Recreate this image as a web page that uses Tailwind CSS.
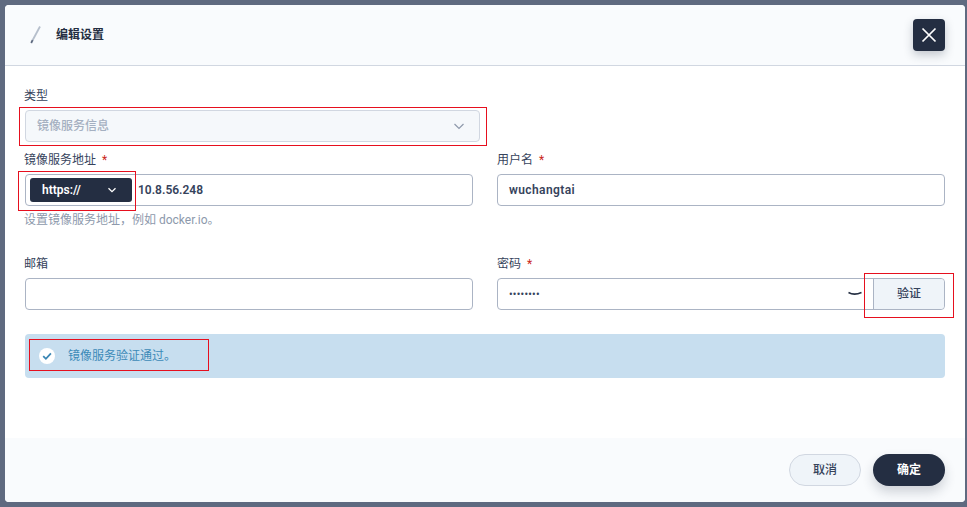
<!DOCTYPE html>
<html lang="zh-CN">
<head>
<meta charset="utf-8">
<script src="https://cdn.jsdelivr.net/npm/@tailwindcss/browser@4"></script>
</head>
<body class="m-0 h-[507px] w-[967px] overflow-hidden bg-[#5f6a80] font-['Roboto','Noto_Sans_CJK_SC',sans-serif] text-[12px] text-[#36435c]">
<div class="relative h-[507px] w-[967px] pt-[5px] pl-[5px]">
  <div class="flex h-[497px] w-[960px] flex-col rounded-[4px] bg-white">
    <header class="flex h-[61px] shrink-0 items-center border-b border-[#d1d7e1] bg-[#f9fbfd] pl-[24px] pr-[20px] rounded-t-[4px]">
      <svg class="h-[20px] w-[12px]" viewBox="0 0 12 20"><path d="M11 1.5 3.2 16" stroke="#b6bfcc" stroke-width="1.8" fill="none"/><path d="M3.6 15.2 2.2 18" stroke="#5f6a80" stroke-width="1.8" fill="none"/></svg>
      <span class="ml-[15px] text-[12px] font-semibold text-[#242e42]">编辑设置</span>
      <button class="ml-auto flex h-[32px] w-[32px] items-center justify-center rounded-[4px] bg-[#242e42] shadow-[0_4px_10px_rgba(36,46,66,0.25)]">
        <svg class="h-[16px] w-[16px]" viewBox="0 0 16 16"><path d="M1.5 1.5 14.5 14.5M14.5 1.5 1.5 14.5" stroke="#fff" stroke-width="1.7" fill="none"/></svg>
      </button>
    </header>
    <main class="flex-1 px-[20px] pt-[21px]">
      <label class="-ml-px block h-[18px] leading-[18px] text-[#36435c]">类型</label>
      <div class="mt-[5px] flex h-[32px] w-[455px] items-center justify-between rounded-[4px] border border-[#d1d7e1] bg-[#f5f8fb] pl-[11px] pr-[14px] text-[#a5b0c1] font-medium">
        <span>镜像服务信息</span>
        <svg class="h-[12px] w-[12px]" viewBox="0 0 12 12"><path d="M1.5 4 6 8.5 10.5 4" stroke="#8e99ab" stroke-width="1.2" fill="none"/></svg>
      </div>
      <div class="mt-[9px] grid grid-cols-2 gap-x-[24px]">
        <div>
          <label class="-ml-px block h-[18px] leading-[18px]">镜像服务地址<span class="ml-[6px] text-[#ca2621]">*</span></label>
          <div class="mt-[5px] flex h-[32px] items-center rounded-[4px] border border-[#abb4c4] bg-white pl-[4px]">
            <div class="flex h-[24px] w-[102px] items-center justify-between rounded-[3px] bg-[#242e42] pl-[12px] pr-[15px] font-semibold text-white">
              <span>https://</span>
              <svg class="h-[10px] w-[10px]" viewBox="0 0 10 10"><path d="M1.5 3.2 5 6.7 8.5 3.2" stroke="#fff" stroke-width="1.3" fill="none"/></svg>
            </div>
            <span class="ml-[6px] font-semibold text-[#36435c]">10.8.56.248</span>
          </div>
          <p class="-ml-px mt-[6px] h-[16px] leading-[16px] text-[#8d99ac]">设置镜像服务地址，例如 docker.io。</p>
        </div>
        <div>
          <label class="block h-[18px] leading-[18px]">用户名<span class="ml-[6px] text-[#ca2621]">*</span></label>
          <div class="mt-[5px] flex h-[32px] items-center rounded-[4px] border border-[#abb4c4] bg-white pl-[11px] font-semibold tracking-[0.4px]">wuchangtai</div>
        </div>
      </div>
      <div class="mt-[27px] grid grid-cols-2 gap-x-[24px]">
        <div>
          <label class="block h-[18px] leading-[18px] -ml-px">邮箱</label>
          <div class="mt-[5px] h-[32px] rounded-[4px] border border-[#abb4c4] bg-white"></div>
        </div>
        <div>
          <label class="block h-[18px] leading-[18px]">密码<span class="ml-[6px] text-[#ca2621]">*</span></label>
          <div class="mt-[5px] flex h-[32px] items-center rounded-[4px] border border-[#abb4c4] bg-white">
            <span class="ml-[11px] font-semibold tracking-[0.3px] text-[10px]">••••••••</span>
            <svg class="ml-auto mr-[10px] h-[6px] w-[16px]" viewBox="0 0 16 6"><path d="M1.5 1.5C5 3.5 10 3.5 14.5 1.5" stroke="#242e42" stroke-width="1.5" fill="none"/></svg>
            <button class="flex h-full w-[71px] items-center justify-center rounded-r-[4px] border-l border-[#abb4c4] bg-[#eff4f9] font-medium text-[#36435c]">验证</button>
          </div>
        </div>
      </div>
      <div class="mt-[24px] flex h-[44px] items-center rounded-[4px] bg-[#c7deef] pl-[14px] text-[#3c8ab8]">
        <span class="flex h-[16px] w-[16px] items-center justify-center rounded-full bg-white">
          <svg class="h-[10px] w-[10px]" viewBox="0 0 10 10"><path d="M1.2 5.2 3.9 7.8 8.9 2.4" stroke="#3a86b4" stroke-width="1.8" fill="none"/></svg>
        </span>
        <span class="ml-[13px]">镜像服务验证通过。</span>
      </div>
    </main>
    <footer class="flex h-[64px] shrink-0 items-center justify-end gap-[12px] rounded-b-[4px] bg-[#f9fbfd] pr-[20px] pb-[1px]">
      <button class="h-[32px] w-[72px] rounded-full border border-[#d1d7e1] bg-[#eff4f9] font-medium text-[#36435c]">取消</button>
      <button class="h-[32px] w-[72px] rounded-full bg-[#242e42] font-semibold text-white shadow-[0_6px_12px_rgba(36,46,66,0.2)]">确定</button>
    </footer>
  </div>
  <div class="absolute left-[19px] top-[107px] h-[39px] w-[468px] border border-[#e60f1e]"></div>
  <div class="absolute left-[18px] top-[171px] h-[40px] w-[118px] border border-[#e60f1e]"></div>
  <div class="absolute left-[864px] top-[273px] h-[45px] w-[90px] border border-[#e60f1e]"></div>
  <div class="absolute left-[29px] top-[339px] h-[32px] w-[180px] border border-[#e60f1e]"></div>
</div>
</body>
</html>
